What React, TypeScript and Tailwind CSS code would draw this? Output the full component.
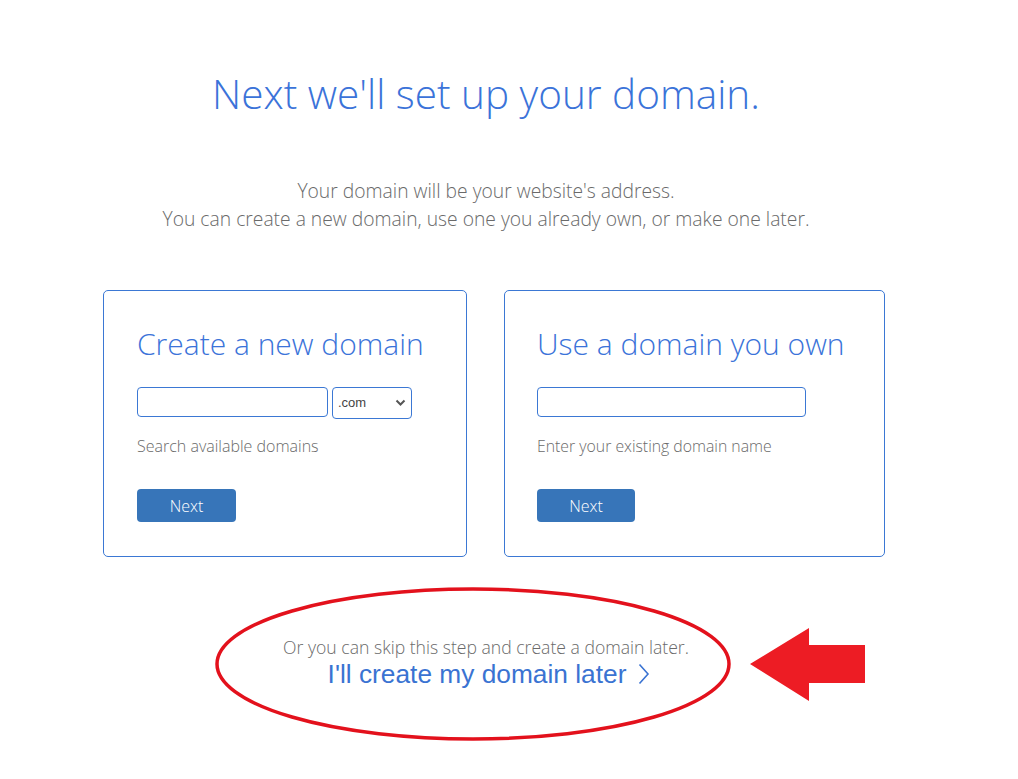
import React from 'react';

function Arrow() {
  return (
    <svg width="116" height="74" viewBox="0 0 116 74" className="shrink-0">
      <polygon points="0,36 59,0 59,17 115,17 115,55 59,55 59,73" fill="#ed1c24" />
    </svg>
  );
}

export default function App() {
  return (
    <div className="min-h-screen bg-white font-['Open_Sans',sans-serif] font-light">
      <div className="ml-[103px] w-[782px] pt-[66px]">
        <h1 className="w-[766px] text-center text-[40.5px] leading-[56px] font-light text-[#3b73d9]">
          Next we'll set up your domain.
        </h1>

        <div className="mt-[55px] w-[766px] text-center text-[19.3px] leading-[28px] text-[#6a6a6a]">
          <p>Your domain will be your website's address.</p>
          <p>You can create a new domain, use one you already own, or make one later.</p>
        </div>

        <div className="mt-[57px] flex gap-[37px]">
          <div className="w-[365px] h-[267px] rounded-[5px] border border-[#3b78d4] px-[33px] pt-[33px]">
            <h2 className="text-[30px] leading-[40px] text-[#3b73d9]">Create a new domain</h2>
            <div className="mt-[23px] flex items-start gap-[4px]">
              <input className="w-[191px] h-[30px] rounded-[4px] border border-[#3b78d4] bg-white outline-none" />
              <div className="relative w-[80px] h-[32px] rounded-[4px] border border-[#3b78d4] flex items-center pl-[5px] font-['Liberation_Sans',sans-serif] font-normal text-[13px] text-[#444]">
                .com
                <svg className="absolute right-[5px] top-[11px]" width="11" height="8" viewBox="0 0 11 8">
                  <path d="M1.5 1.5 L5.5 5.5 L9.5 1.5" fill="none" stroke="#555" strokeWidth="2" />
                </svg>
              </div>
            </div>
            <p className="mt-[15px] text-[16px] leading-[24px] text-[#6a6a6a]">Search available domains</p>
            <button className="mt-[31px] w-[99px] h-[33px] rounded-[4px] bg-[#3775b9] text-white text-[16px] font-light">
              Next
            </button>
          </div>

          <div className="w-[382px] h-[267px] rounded-[5px] border border-[#3b78d4] px-[32px] pt-[33px]">
            <h2 className="text-[30px] leading-[40px] text-[#3b73d9]">Use a domain you own</h2>
            <div className="mt-[23px] flex">
              <input className="w-[269px] h-[30px] rounded-[4px] border border-[#3b78d4] bg-white outline-none" />
            </div>
            <p className="mt-[17px] text-[15.8px] leading-[24px] text-[#6a6a6a]">Enter your existing domain name</p>
            <button className="mt-[31px] w-[98px] h-[33px] rounded-[4px] bg-[#3775b9] text-white text-[16px] font-light">
              Next
            </button>
          </div>
        </div>
      </div>

      <div className="relative ml-[103px] w-[766px] mt-[32px]">
        <div className="flex flex-col items-center pt-[47px] pb-[50px]">
          <p className="text-[17.6px] leading-[22px] text-[#6a6a6a]">Or you can skip this step and create a domain later.</p>
          <a className="mt-[1px] ml-[6px] flex items-center gap-[12px] font-['Liberation_Sans',sans-serif] font-normal text-[26.3px] leading-[30px] text-[#3a73d2]">
            I'll create my domain later
            <svg width="12" height="22" viewBox="0 0 12 22">
              <path d="M1.5 1.5 L10 11 L1.5 20.5" fill="none" stroke="#3a73d2" strokeWidth="1.6" />
            </svg>
          </a>
        </div>
        <svg className="pointer-events-none absolute left-[111px] top-[-2px]" width="520" height="156" viewBox="0 0 520 156">
          <ellipse cx="259" cy="77" rx="256" ry="75" fill="none" stroke="#e3111c" strokeWidth="3.5" />
        </svg>
        <div className="absolute left-[647px] top-[39px]">
          <Arrow />
        </div>
      </div>
    </div>
  );
}
